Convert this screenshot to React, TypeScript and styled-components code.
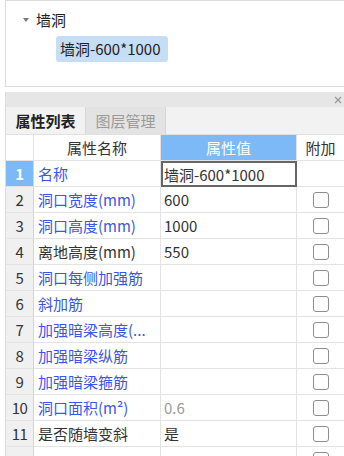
import React from "react";
import styled, { createGlobalStyle } from "styled-components";

const GlobalStyle = createGlobalStyle`
  body {
    margin: 0;
    background: #ffffff;
    font-family: "Noto Sans CJK SC", "Noto Sans", sans-serif;
    font-size: 15px;
    color: #222;
  }
`;

const Page = styled.div`
  width: 344px;
  height: 456px;
  overflow: hidden;
  padding-left: 5px;
  box-sizing: border-box;
  display: flex;
  flex-direction: column;
  gap: 5px;
`;

const TreePanel = styled.div`
  flex-shrink: 0;
  height: 87px;
  box-sizing: border-box;
  border: 1px solid #dcdcdc;
  border-right: none;
  padding: 9px 0 0 17px;
  display: flex;
  flex-direction: column;
  gap: 6px;
`;

const TreeNode = styled.div`
  display: flex;
  align-items: center;
  gap: 7px;
  height: 20px;
  line-height: 20px;
`;

const Caret = styled.span`
  width: 0;
  height: 0;
  border-left: 3.5px solid transparent;
  border-right: 3.5px solid transparent;
  border-top: 4px solid #777;
`;

const TreeLeaf = styled.div`
  margin-left: 33px;
  align-self: flex-start;
  height: 26px;
  line-height: 26px;
  padding: 0 4px;
  width: 104px;
  border-radius: 3px;
  background: #c6ddf6;
  color: #222;
`;

const PropPanel = styled.div`
  flex: 1;
  min-height: 0;
  border-left: 1px solid #dcdcdc;
  display: flex;
  flex-direction: column;
`;

const TitleBar = styled.div`
  flex-shrink: 0;
  height: 15px;
  background: #e6e6e6;
  display: flex;
  justify-content: flex-end;
  align-items: center;
  padding-right: 2px;
`;

const CloseIcon = () => (
  <svg width="8" height="8" viewBox="0 0 8 8">
    <path d="M1 1L7 7M7 1L1 7" stroke="#999" strokeWidth="1.3" />
  </svg>
);

const TabBar = styled.div`
  flex-shrink: 0;
  height: 28px;
  background: #f2f2f2;
  display: flex;
  border-bottom: 1px solid #e0e0e0;
  box-sizing: border-box;
`;

const Tab = styled.div<{ $active?: boolean }>`
  width: 80px;
  display: flex;
  align-items: center;
  justify-content: center;
  font-weight: ${(p) => (p.$active ? 700 : 400)};
  color: ${(p) => (p.$active ? "#222" : "#9a9a9a")};
  background: ${(p) => (p.$active ? "#f2f2f2" : "#e3e3e3")};
  border-right: 1px solid #d6d6d6;
  box-sizing: border-box;
`;

const Grid = styled.div`
  flex-shrink: 0;
  display: grid;
  grid-template-columns: 28px 127px 136px 1fr;
  grid-auto-rows: 26px;
`;

const Cell = styled.div`
  display: flex;
  align-items: center;
  border-bottom: 1px solid #e3e3e3;
  border-right: 1px solid #e3e3e3;
  box-sizing: border-box;
  white-space: nowrap;
  overflow: hidden;
`;

const HeadCell = styled(Cell)<{ $blue?: boolean }>`
  justify-content: center;
  background: ${(p) => (p.$blue ? "#7cb9f6" : "#ffffff")};
  color: ${(p) => (p.$blue ? "#ffffff" : "#333")};
`;

const NumCell = styled(Cell)<{ $selected?: boolean }>`
  justify-content: center;
  background: ${(p) => (p.$selected ? "#7cb9f6" : "#f0f0f0")};
  color: ${(p) => (p.$selected ? "#ffffff" : "#333")};
  font-weight: ${(p) => (p.$selected ? 700 : 400)};
  border-right-color: #d4d4d4;
  letter-spacing: -0.5px;
`;

const NameCell = styled(Cell)<{ $blue: boolean }>`
  padding-left: 4px;
  color: ${(p) => (p.$blue ? "#3a56e6" : "#333")};
`;

const ValueCell = styled(Cell)<{ $editing?: boolean; $muted?: boolean }>`
  padding-left: 3px;
  color: ${(p) => (p.$muted ? "#9a9a9a" : "#333")};
  ${(p) =>
    p.$editing &&
    `
    border: 2px solid #666;
    padding-left: 1px;
  `}
`;

const CheckCell = styled(Cell)`
  justify-content: center;
  border-right: none;
`;

const CheckBox = styled.span`
  width: 16px;
  height: 16px;
  box-sizing: border-box;
  border: 1.5px solid #8e8e8e;
  border-radius: 3px;
  background: #fff;
`;

interface Row {
  name: string;
  value: string;
  blue: boolean;
  muted?: boolean;
  check: boolean;
}

const rows: Row[] = [
  { name: "名称", value: "墙洞-600*1000", blue: true, check: false },
  { name: "洞口宽度(mm)", value: "600", blue: true, check: true },
  { name: "洞口高度(mm)", value: "1000", blue: true, check: true },
  { name: "离地高度(mm)", value: "550", blue: false, check: true },
  { name: "洞口每侧加强筋", value: "", blue: true, check: true },
  { name: "斜加筋", value: "", blue: true, check: true },
  { name: "加强暗梁高度(...", value: "", blue: true, check: true },
  { name: "加强暗梁纵筋", value: "", blue: true, check: true },
  { name: "加强暗梁箍筋", value: "", blue: true, check: true },
  { name: "洞口面积(m²)", value: "0.6", blue: true, muted: true, check: true },
  { name: "是否随墙变斜", value: "是", blue: false, check: true },
  { name: "", value: "", blue: false, check: true },
];

const App = () => (
  <>
    <GlobalStyle />
    <Page>
      <TreePanel>
        <TreeNode>
          <Caret />
          <span>墙洞</span>
        </TreeNode>
        <TreeLeaf>墙洞-600*1000</TreeLeaf>
      </TreePanel>
      <PropPanel>
        <TitleBar>
          <CloseIcon />
        </TitleBar>
        <TabBar>
          <Tab $active>属性列表</Tab>
          <Tab>图层管理</Tab>
        </TabBar>
        <Grid>
          <HeadCell />
          <HeadCell>属性名称</HeadCell>
          <HeadCell $blue>属性值</HeadCell>
          <HeadCell style={{ borderRight: "none" }}>附加</HeadCell>
          {rows.map((r, i) => (
            <React.Fragment key={i}>
              <NumCell $selected={i === 0}>{i < 11 ? i + 1 : ""}</NumCell>
              <NameCell $blue={r.blue}>{r.name}</NameCell>
              <ValueCell $editing={i === 0} $muted={r.muted}>
                {r.value}
              </ValueCell>
              <CheckCell>{r.check && <CheckBox />}</CheckCell>
            </React.Fragment>
          ))}
        </Grid>
      </PropPanel>
    </Page>
  </>
);

export default App;
